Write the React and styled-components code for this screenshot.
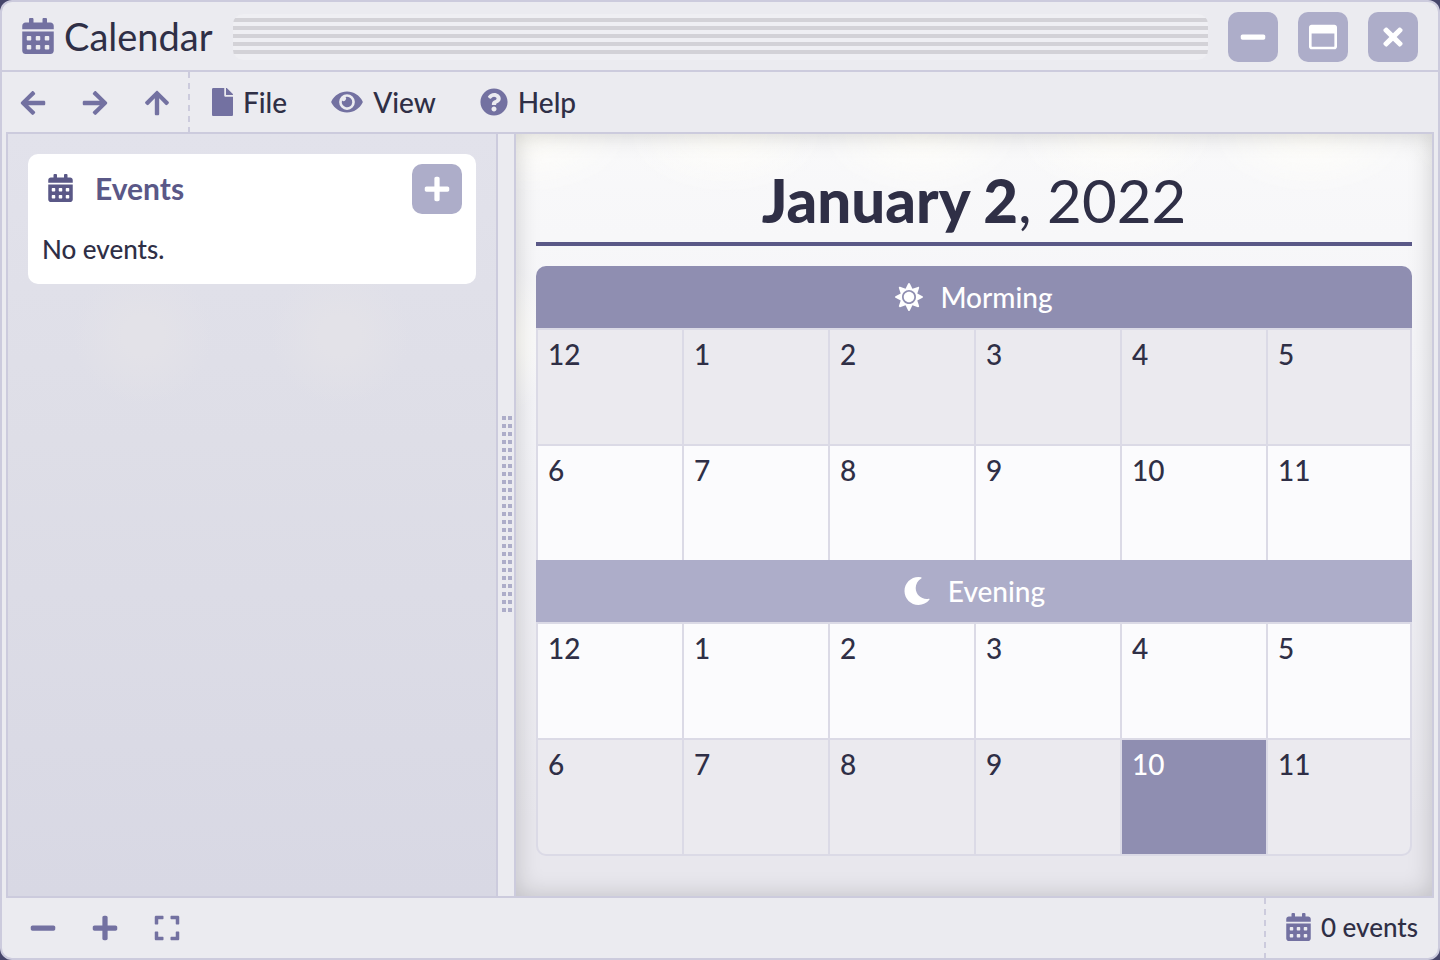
import React from "react";
import styled, { createGlobalStyle } from "styled-components";
import {
  FaArrowLeft,
  FaArrowRight,
  FaArrowUp,
  FaCalendarAlt,
  FaExpand,
  FaEye,
  FaFile,
  FaMinus,
  FaMoon,
  FaPlus,
  FaQuestionCircle,
  FaRegWindowMaximize,
  FaSun,
  FaTimes,
} from "react-icons/fa";

const color = {
  surface: "#ebebf0",
  border: "#cccbdd",
  gridLine: "#dbdae6",
  text: "#2f2f46",
  icon: "#7371a1",
  accent: "#5a5887",
  button: "#adadc9",
  strong: "#8f8eb1",
};

const Global = createGlobalStyle`
  *, *::before, *::after { box-sizing: border-box; }
  body {
    margin: 0;
    background: #46466a;
    color: ${color.text};
    font-family: Lato, "Open Sans", sans-serif;
    font-size: 28px;
    font-weight: 500;
    line-height: 30px;
  }
  button {
    margin: 0;
    padding: 0;
    border: 0;
    background: none;
    color: inherit;
    font: inherit;
    cursor: pointer;
  }
`;

const Glyph = styled.svg`
  display: block;
  flex: none;
  width: ${(p) => p.$width || 28}px;
  height: ${(p) => p.$height || 28}px;
  color: ${(p) => (p.$tinted ? color.icon : "inherit")};
`;

const Window = styled.div`
  display: flex;
  flex-direction: column;
  min-height: 100vh;
  border: 2px solid ${color.border};
  border-radius: 12px;
  background: ${color.surface};
`;

const TitleBar = styled.header`
  display: flex;
  align-items: center;
  gap: 20px;
  padding: 10px 20px 8px;
  border-bottom: 2px solid ${color.border};
`;

const Title = styled.h1`
  display: flex;
  align-items: center;
  gap: 10px;
  margin: 0;
  padding-bottom: 2px;
  font-size: 38px;
  font-weight: 400;
  line-height: 40px;
`;

const DragStripes = styled.div`
  flex: 1;
  height: 46px;
  border-radius: 10px;
  background: #efeff3 repeating-linear-gradient(#efeff3 0 4px, #d3d2d7 4px 8px)
    0 0 / 100% 40px no-repeat;
`;

const SquareButton = styled.button`
  display: grid;
  place-items: center;
  width: 50px;
  height: 50px;
  border-radius: 10px;
  background: ${color.button};
  color: #fff;
`;

const Toolbar = styled.div`
  display: flex;
  height: 60px;
`;

const ButtonGroup = styled.div`
  display: flex;
  padding: ${(p) => (p.$inset ? "0 0 0 10px" : "2px 0 0")};
`;

const ToolButton = styled.button`
  display: grid;
  place-items: center;
  width: 62px;
  color: ${color.icon};
`;

const Divider = styled.div`
  width: 2px;
  background: repeating-linear-gradient(
    ${color.border} 0 6px,
    transparent 6px 11px
  );
`;

const MenuButton = styled.button`
  display: flex;
  align-items: center;
  gap: 10px;
  padding: 0 22px;
`;

const Workspace = styled.div`
  display: flex;
  flex: 1;
  margin: 0 4px;
  border: 2px solid ${color.border};
`;

const Sidebar = styled.aside`
  flex: 0 0 488px;
  padding: 20px;
  background:
    radial-gradient(circle at 135px 201px, #e3e2e8 20px, transparent 70px),
    radial-gradient(circle at 332px 201px, #e3e2e8 20px, transparent 70px),
    linear-gradient(#e2e2eb, #dedee7 40%, #d8d8e4);
`;

const Card = styled.section`
  padding: 10px 14px;
  border-radius: 10px;
  background: #fff;
`;

const CardHeader = styled.div`
  display: flex;
  align-items: center;
  justify-content: space-between;
`;

const CardTitle = styled.h2`
  display: flex;
  align-items: center;
  gap: 22px;
  margin: 0;
  padding: 0 0 2px 6px;
  color: ${color.accent};
  font-size: 30px;
  font-weight: 700;
`;

const CardText = styled.p`
  margin: 20px 0 10px;
  font-size: 26px;
`;

const Splitter = styled.div`
  display: flex;
  align-items: center;
  justify-content: center;
  flex: 0 0 20px;
  padding: 0 0 2px 2px;
  border: solid ${color.border};
  border-width: 0 2px;
  cursor: col-resize;
`;

const Grip = styled.div`
  display: flex;
  gap: 2px;
  height: 196px;
`;

const GripDots = styled.span`
  width: 4px;
  background: repeating-linear-gradient(
    ${color.button} 0 4px,
    transparent 4px 8px
  );
`;

const DayView = styled.main`
  flex: 1;
  min-width: 0;
  padding: 20px;
  background:
    radial-gradient(ellipse 30px 70px at 0 206px, #fffefa, transparent),
    radial-gradient(ellipse 100px 60px at 50% 0, #fffefa, transparent) -83px 0 /
      195px 60px repeat-x,
    linear-gradient(#f9f9fa, #f3f3f7 40%, #e8e7ed 90%);
  box-shadow: inset 0 0 24px rgba(0, 0, 0, 0.18);
`;

const DateHeading = styled.h2`
  margin: 0 0 20px;
  padding: 14px 0 10px;
  border-bottom: 4px solid ${color.accent};
  font-size: 60px;
  font-weight: 400;
  line-height: 64px;
  text-align: center;

  strong { font-weight: 900; }
`;

const Hours = styled.table`
  width: 100%;
  table-layout: fixed;
  border-collapse: separate;
  border-spacing: 0;
`;

const PeriodCell = styled.th`
  height: 62px;
  padding: 0;
  border-radius: ${(p) => (p.$first ? "10px 10px 0 0" : "0")};
  background: ${(p) => (p.$first ? color.strong : color.button)};
  color: #fff;
  font-weight: 500;
`;

const PeriodLabel = styled.span`
  display: flex;
  align-items: center;
  justify-content: center;
  gap: 17px;
`;

const HourCell = styled.td`
  height: ${(p) => (p.$last ? 118 : 116)}px;
  padding: 9px 10px;
  border: solid ${color.gridLine};
  border-width: 2px 0 ${(p) => (p.$last ? "2px" : "0")} 2px;
  background: ${(p) =>
    p.$current ? color.strong : p.$shaded ? "#ebeaef" : "#fbfbfd"};
  background-clip: padding-box;
  color: ${(p) => (p.$current ? "#fff" : "inherit")};
  vertical-align: top;

  &:last-child {
    border-right-width: 2px;
    border-bottom-right-radius: ${(p) => (p.$last ? "10px" : "0")};
  }
  &:first-child {
    border-bottom-left-radius: ${(p) => (p.$last ? "10px" : "0")};
  }
`;

const StatusBar = styled.footer`
  display: flex;
  justify-content: space-between;
  height: 60px;
`;

const StatusArea = styled.div`
  display: flex;
`;

const Status = styled.div`
  display: flex;
  align-items: center;
  gap: 10px;
  padding: 0 20px 2px;
  font-size: 26px;
`;

const EARLY = [12, 1, 2, 3, 4, 5];
const LATE = [6, 7, 8, 9, 10, 11];

const periods = [
  {
    label: "Morming",
    icon: FaSun,
    rows: [
      { hours: EARLY, shaded: true },
      { hours: LATE, shaded: false },
    ],
  },
  {
    label: "Evening",
    icon: FaMoon,
    rows: [
      { hours: EARLY, shaded: false },
      { hours: LATE, shaded: true, current: 10, last: true },
    ],
  },
];

const menus = [
  { label: "File", icon: FaFile, width: 21 },
  { label: "View", icon: FaEye, width: 32 },
  { label: "Help", icon: FaQuestionCircle, width: 28 },
];

const navigation = [
  { label: "Back", icon: FaArrowLeft },
  { label: "Forward", icon: FaArrowRight },
  { label: "Up", icon: FaArrowUp },
];

const zoomTools = [
  { label: "Zoom out", icon: FaMinus },
  { label: "Zoom in", icon: FaPlus },
  { label: "Fit to window", icon: FaExpand },
];

const windowControls = [
  { label: "Minimize", icon: FaMinus },
  { label: "Maximize", icon: FaRegWindowMaximize },
  { label: "Close", icon: FaTimes },
];

function Period({ label, icon, rows, first }) {
  return (
    <tbody>
      <tr>
        <PeriodCell colSpan={6} scope="rowgroup" $first={first}>
          <PeriodLabel>
            <Glyph as={icon} />
            {label}
          </PeriodLabel>
        </PeriodCell>
      </tr>
      {rows.map((row) => (
        <tr key={row.hours[0]}>
          {row.hours.map((hour) => (
            <HourCell
              key={hour}
              $shaded={row.shaded}
              $last={row.last}
              $current={row.current === hour}
            >
              {hour}
            </HourCell>
          ))}
        </tr>
      ))}
    </tbody>
  );
}

function ToolButtons({ items, inset }) {
  return (
    <ButtonGroup $inset={inset}>
      {items.map(({ label, icon }) => (
        <ToolButton key={label} aria-label={label}>
          <Glyph as={icon} />
        </ToolButton>
      ))}
    </ButtonGroup>
  );
}

export default function App() {
  return (
    <>
      <Global />
      <Window>
        <TitleBar>
          <Title>
            <Glyph as={FaCalendarAlt} $width={32} $height={36} $tinted />
            Calendar
          </Title>
          <DragStripes />
          {windowControls.map(({ label, icon }) => (
            <SquareButton key={label} aria-label={label}>
              <Glyph as={icon} />
            </SquareButton>
          ))}
        </TitleBar>
        <Toolbar>
          <ToolButtons items={navigation} />
          <Divider />
          {menus.map(({ label, icon, width }) => (
            <MenuButton key={label}>
              <Glyph as={icon} $width={width} $tinted />
              {label}
            </MenuButton>
          ))}
        </Toolbar>
        <Workspace>
          <Sidebar>
            <Card>
              <CardHeader>
                <CardTitle>
                  <Glyph as={FaCalendarAlt} $width={25} />
                  Events
                </CardTitle>
                <SquareButton aria-label="Add event">
                  <Glyph as={FaPlus} />
                </SquareButton>
              </CardHeader>
              <CardText>No events.</CardText>
            </Card>
          </Sidebar>
          <Splitter role="separator" aria-orientation="vertical">
            <Grip>
              <GripDots />
              <GripDots />
            </Grip>
          </Splitter>
          <DayView>
            <DateHeading>
              <strong>January 2</strong>, 2022
            </DateHeading>
            <Hours>
              {periods.map((period, i) => (
                <Period key={period.label} {...period} first={i === 0} />
              ))}
            </Hours>
          </DayView>
        </Workspace>
        <StatusBar>
          <ToolButtons items={zoomTools} inset />
          <StatusArea>
            <Divider />
            <Status>
              <Glyph as={FaCalendarAlt} $width={25} $tinted />
              0 events
            </Status>
          </StatusArea>
        </StatusBar>
      </Window>
    </>
  );
}
